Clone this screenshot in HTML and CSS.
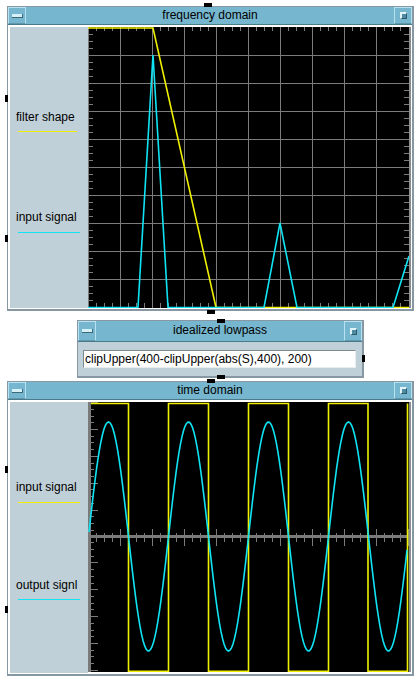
FILE: index.html
```html
<!DOCTYPE html>
<html>
<head>
<meta charset="utf-8">
<title>signal windows</title>
<link rel="stylesheet" href="styles.css">
</head>
<body>
<div class="page">

  <section class="win win-freq">
    <span class="pin pin-h freq-top"></span>
    <span class="pin pin-v freq-left1"></span>
    <span class="pin pin-v freq-left2"></span>
    <span class="pin pin-h freq-bottom"></span>
    <header class="titlebar">
      <span class="tb-btn tb-min"><span class="min-bar"></span></span>
      <span class="tb-title">frequency domain</span>
      <span class="tb-btn tb-max"><span class="max-sq"></span></span>
    </header>
    <div class="content">
      <aside class="legend legend-freq">
        <div class="leg-item">
          <span class="leg-label">filter shape</span>
          <span class="leg-line yellow-line short"></span>
        </div>
        <div class="leg-item">
          <span class="leg-label">input signal</span>
          <span class="leg-line cyan-line"></span>
        </div>
      </aside>
      <svg class="plot plot-freq" width="321" height="281" viewBox="0 0 321 281">
        <path id="fgrid" class="grid" d=""></path>
        <path id="fticks" class="grid" d=""></path>
        <line class="grid" x1="0.5" y1="0" x2="0.5" y2="281"></line>
        <polyline class="yel" points="0,1 65,1 128,280.5 321,280.5"></polyline>
        <polyline class="cya" points="0,280.5 50,280.5 65,28 80,280.5 176,280.5 192,196 209,280.5 305,280.5 321,229"></polyline>
      </svg>
    </div>
  </section>

  <section class="win win-filter">
    <span class="pin pin-h filt-top"></span>
    <span class="pin pin-v filt-right"></span>
    <span class="pin pin-h filt-bottom"></span>
    <header class="titlebar titlebar-tall">
      <span class="tb-btn tb-min"><span class="min-bar"></span></span>
      <span class="tb-title">idealized lowpass</span>
      <span class="tb-btn tb-max"><span class="max-sq"></span></span>
    </header>
    <div class="filter-body">
      <div class="expr">clipUpper(400-clipUpper(abs(S),400), 200)</div>
    </div>
  </section>

  <section class="win win-time">
    <span class="pin pin-h time-top"></span>
    <span class="pin pin-v time-left1"></span>
    <span class="pin pin-v time-left2"></span>
    <span class="pin pin-h time-bottom"></span>
    <header class="titlebar">
      <span class="tb-btn tb-min"><span class="min-bar"></span></span>
      <span class="tb-title">time domain</span>
      <span class="tb-btn tb-max"><span class="max-sq"></span></span>
    </header>
    <div class="content">
      <aside class="legend legend-time">
        <div class="leg-item">
          <span class="leg-label">input signal</span>
          <span class="leg-line yellow-line"></span>
        </div>
        <div class="leg-item">
          <span class="leg-label">output signl</span>
          <span class="leg-line cyan-line"></span>
        </div>
      </aside>
      <svg class="plot plot-time" width="321" height="270" viewBox="0 0 321 270">
        <rect class="axis-fill" x="0" y="0" width="3" height="270"></rect>
        <path id="tticks" class="grid" d=""></path>
        <rect class="axis-fill" x="0" y="133" width="321" height="3"></rect>
        <path id="square" class="yel" d=""></path>
        <polyline id="sine" class="cya" points=""></polyline>
      </svg>
    </div>
  </section>

</div>
<script src="script.js"></script>
</body>
</html>
```

FILE: styles.css
```css
* { box-sizing: border-box; }
html, body { margin: 0; padding: 0; background: #ffffff; }
body {
  font-family: "Liberation Sans", Arial, sans-serif;
  font-size: 12px;
  color: #000;
}
.page {
  padding: 6px 0 0 7px;
  display: flex;
  flex-direction: column;
  align-items: flex-start;
}

/* windows */
.win {
  position: relative;
  display: flex;
  flex-direction: column;
  background: #ffffff;
  border-style: solid;
  border-color: #8898a2;
  border-width: 1px 2px 2px 1px;
}
.win-freq { width: 407px; height: 305px; }
.win-filter { width: 287px; height: 58px; margin: 9px 0 0 70px; }
.win-time { width: 407px; height: 295px; margin-top: 3px; }

/* title bars */
.titlebar {
  height: 18px;
  flex: none;
  display: flex;
  align-items: stretch;
  background: #76b6ce;
  border-bottom: 1px solid #4a7a8c;
}
.titlebar-tall { height: 21px; }
.tb-btn {
  flex: none;
  width: 18px;
  display: flex;
  align-items: center;
  justify-content: center;
  border: 1px solid #b6e2f2;
  border-bottom-color: #5f97ab;
}
.tb-title {
  flex: 1;
  text-align: center;
  line-height: 16px;
  font-size: 12px;
  color: #000;
}
.titlebar-tall .tb-title { line-height: 19px; }
.min-bar {
  width: 11px;
  height: 4px;
  background: #d6f0f8;
  border-right: 1px solid #3c6878;
  border-bottom: 1px solid #3c6878;
}
.max-sq {
  width: 7px;
  height: 7px;
  background: #4e8aa0;
  border-top: 2px solid #e0f4fa;
  border-left: 2px solid #e0f4fa;
  border-right: 1px solid #2e5a6a;
  border-bottom: 1px solid #2e5a6a;
}

/* content */
.content {
  flex: 1;
  display: flex;
  padding: 2px 1px 1px 2px;
}
.legend {
  width: 78px;
  flex: none;
  background: #c0d0d8;
  display: flex;
  flex-direction: column;
  padding-left: 6px;
}
.legend-freq { padding-top: 83px; }
.legend-freq .leg-item + .leg-item { margin-top: 78px; }
.legend-freq .leg-item + .leg-item .leg-line { margin-top: 8px; }
.legend-time { padding-top: 78px; }
.legend-time .leg-item + .leg-item { margin-top: 75px; }
.leg-item { display: flex; flex-direction: column; flex: none; }
.leg-label { display: block; height: 14px; line-height: 14px; white-space: nowrap; flex: none; }
.leg-line { display: block; flex: none; height: 1px; min-height: 1px; width: 62px; margin: 7px 0 0 2px; }
.leg-line.short { width: 59px; }
.legend-time .leg-item:first-child .leg-line { margin-top: 8px; }
.yellow-line { background: #f0f000; }
.cyan-line { background: #10e4f4; }

.plot {
  display: block;
  flex: none;
  background: #000;
  border-right: 2px solid #8a8e90;
  box-sizing: content-box;
}
.grid { stroke: #7c7c7c; stroke-width: 1; fill: none; shape-rendering: crispEdges; }
.axis-fill { fill: #7a7a7a; }
.yel { stroke: #f0f000; stroke-width: 1.6; fill: none; }
.cya { stroke: #10e4f4; stroke-width: 1.6; fill: none; }

/* filter window */
.filter-body {
  flex: 1;
  background: #c0d0d8;
  padding: 8px 6px 0 5px;
}
.expr {
  height: 18px;
  background: #fff;
  border-style: solid;
  border-width: 1px;
  border-color: #7c8a92 #e8eef0 #e8eef0 #7c8a92;
  line-height: 16px;
  padding-left: 1px;
  white-space: nowrap;
  font-size: 12px;
}

/* connection pins (overlay on window edges) */
.pin { position: absolute; background: #000; }
.pin-h { width: 8px; height: 4px; }
.pin-v { width: 3px; height: 7px; }
.freq-top { left: 196px; top: -4px; }
.freq-left1 { left: -3px; top: 88px; }
.freq-left2 { left: -3px; top: 228px; }
.freq-bottom { left: 199px; top: 303px; }
.filt-top { left: 139px; top: -2px; }
.filt-right { left: 284px; top: 34px; }
.filt-bottom { left: 139px; top: 54px; }
.time-top { left: 199px; top: -3px; }
.time-left1 { left: -3px; top: 84px; }
.time-left2 { left: -3px; top: 224px; }
.time-bottom { left: 199px; top: 294px; }
```

FILE: script.js
```js
(function () {
  function r(n) { return Math.round(n * 100) / 100; }

  // frequency plot grid and ticks
  var g = '';
  var k;
  for (k = 1; k <= 9; k++) { g += 'M' + (32 * k + 0.5) + ' 0V281'; }
  for (k = 1; k <= 9; k++) { g += 'M0 ' + (28 * k + 0.5) + 'H321'; }
  document.getElementById('fgrid').setAttribute('d', g);

  var t = '';
  for (k = 1; k < 40; k++) {
    var y = 7 * k + 0.5;
    t += 'M0 ' + y + 'h5M321 ' + y + 'h-5';
  }
  for (k = 1; k < 40; k++) {
    var x = 8 * k + 0.5;
    t += 'M' + x + ' 0v4M' + x + ' 281v-5';
  }
  document.getElementById('fticks').setAttribute('d', t);

  // time plot ticks
  var c = 134.5;
  var tt = '';
  for (k = 1; k <= 40; k++) {
    var tx = 8 * k + 0.5;
    if (k % 4 === 0) tt += 'M' + tx + ' 127V144';
    else tt += 'M' + tx + ' 131V140';
  }
  for (k = 1; k <= 20; k++) {
    var len = (k % 4 === 0) ? 7 : 3;
    var y1 = Math.round(c - 6.72 * k) + 0.5;
    var y2 = Math.round(c + 6.72 * k) - 0.5;
    tt += 'M3 ' + y1 + 'h' + len + 'M3 ' + y2 + 'h' + len;
  }
  document.getElementById('tticks').setAttribute('d', tt);

  // square wave
  var hi = 1.5, lo = 269.2;
  var edges = [40.5, 80.5, 120.5, 160.5, 200.5, 240.5, 280, 319.5];
  var d = 'M3 ' + hi;
  var level = hi;
  for (k = 0; k < edges.length; k++) {
    d += 'H' + edges[k];
    level = (level === hi) ? lo : hi;
    d += 'V' + level;
  }
  document.getElementById('square').setAttribute('d', d);

  // sine
  var pts = [];
  for (var sx = 1; sx <= 320; sx += 1.5) {
    var sy = c - 114.5 * Math.sin(2 * Math.PI * (sx - 0.5) / 80);
    pts.push(r(sx) + ',' + r(sy));
  }
  document.getElementById('sine').setAttribute('points', pts.join(' '));
})();
```
